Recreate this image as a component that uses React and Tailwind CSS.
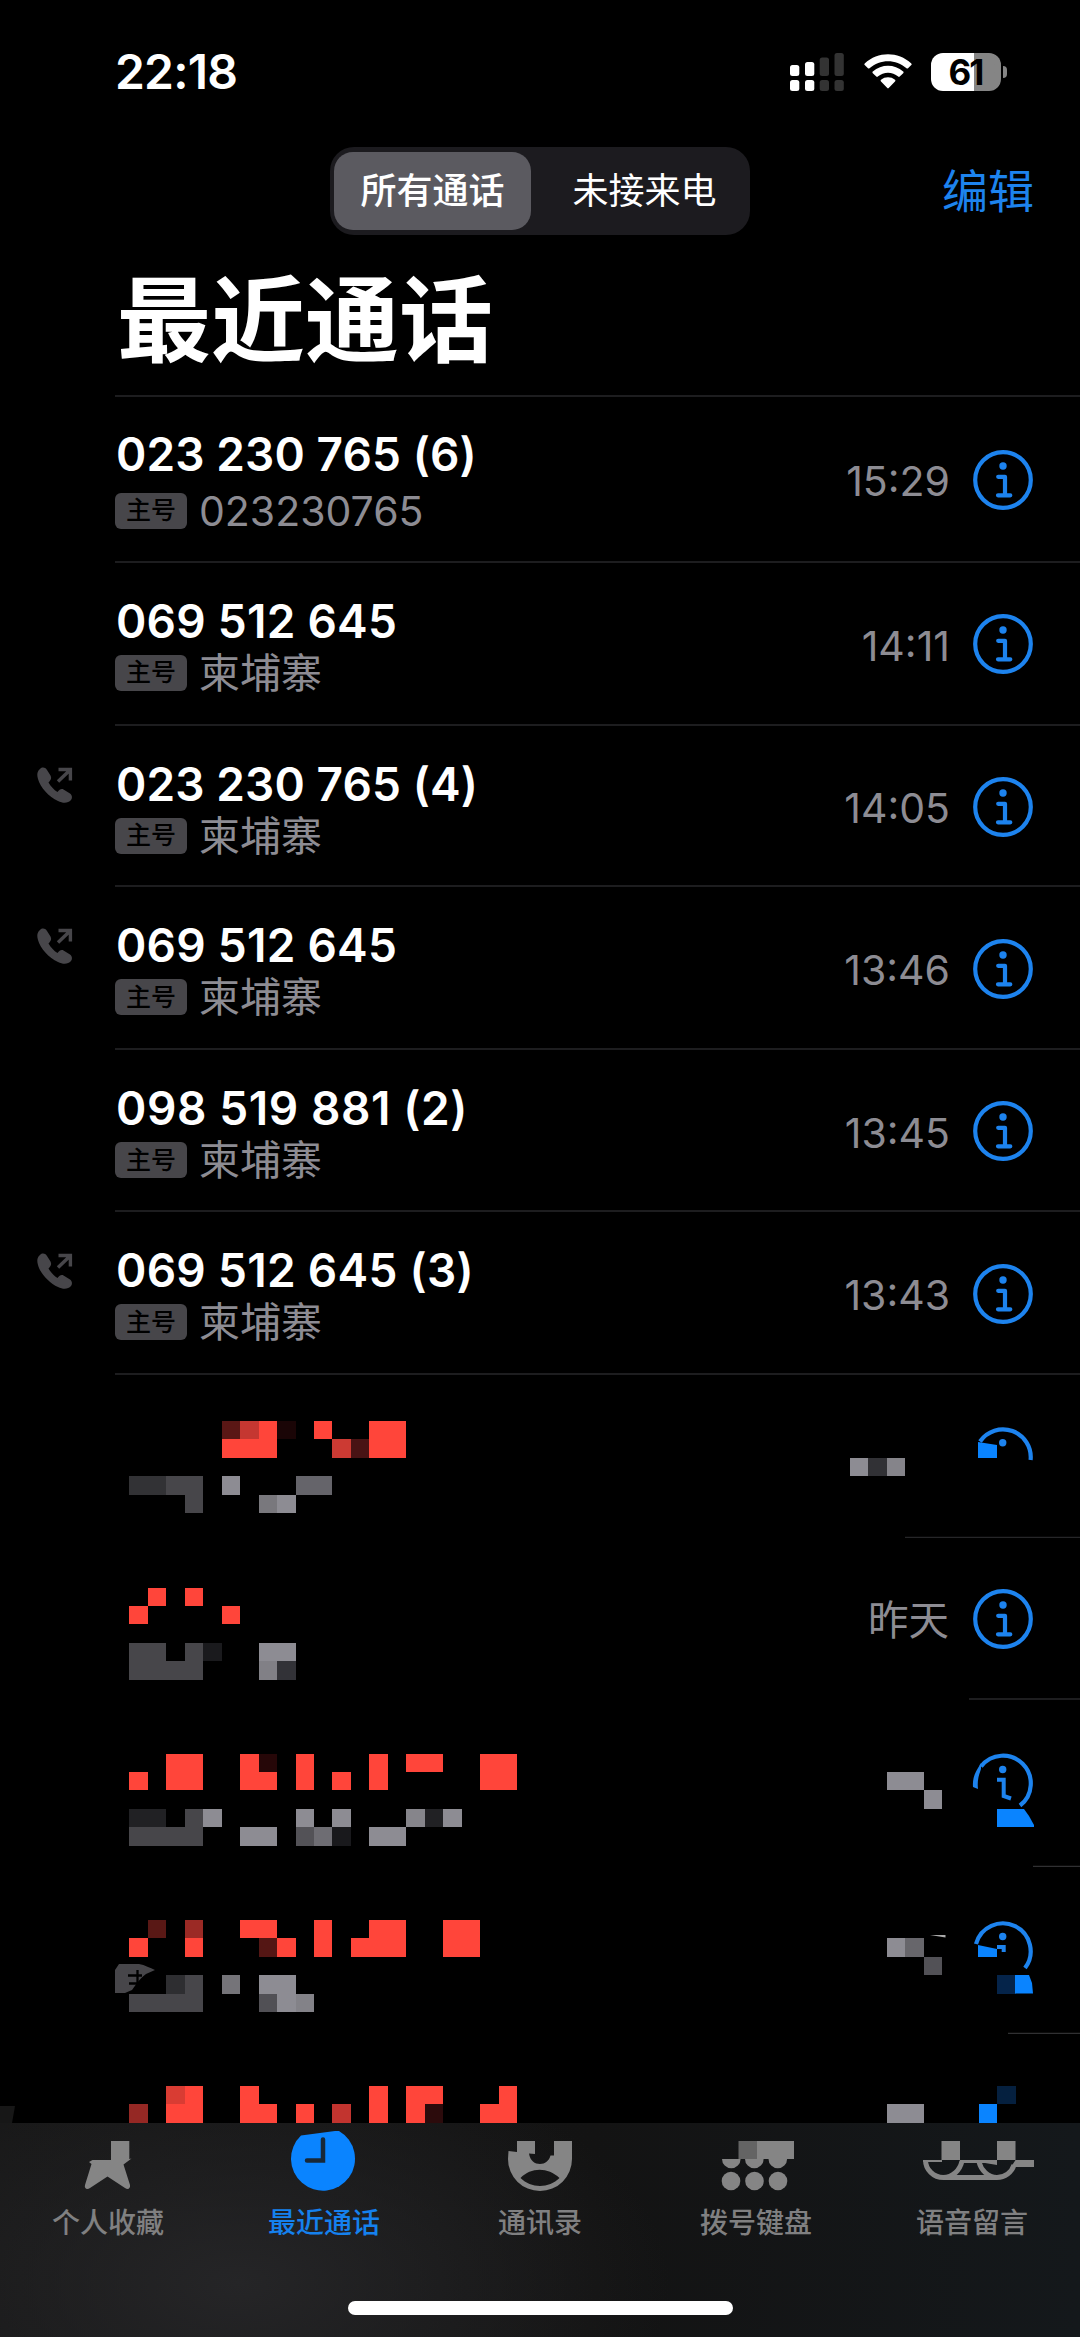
import React from 'react';

const CELL = 18.47;
const RED = '#ff453a';
const DIM = '#47464a';
const LIGHT = '#8d8c93';
const BLUE = '#0a84ff';

const CALLS = [
  { number: '023 230 765 (6)', place: '023230765', time: '15:29', height: 'h-[166px]', top: 'pt-[29px]', gap: 'mt-[11px]' },
  { number: '069 512 645', place: '柬埔寨', time: '14:11', height: 'h-[163px]', tracking: 'tracking-[0.25px]' },
  { number: '023 230 765 (4)', place: '柬埔寨', time: '14:05', height: 'h-[162px]', outgoing: true },
  { number: '069 512 645', place: '柬埔寨', time: '13:46', height: 'h-[163px]', outgoing: true, tracking: 'tracking-[0.25px]' },
  { number: '098 519 881 (2)', place: '柬埔寨', time: '13:45', height: 'h-[162px]', tracking: 'tracking-[0.6px]' },
  { number: '069 512 645 (3)', place: '柬埔寨', time: '13:43', height: 'h-[163px]', outgoing: true, tracking: 'tracking-[0.3px]' },
];

// [column, row, columns, rows, colour], in mosaic cells
const MOSAIC_A = [
  [12, 0, 3, 2, RED], [12, 0, 1, 1, '#5a1715'], [13, 0, 1, 1, '#c53731'], [15, 0, 1, 1, '#1a0506'],
  [17, 0, 1, 1, RED], [18, 1, 1, 1, '#cc3a33'], [19, 1, 1, 1, '#481314'], [20, 0, 2, 2, RED],
  [7, 3, 2, 1, '#323235'], [9, 3, 2, 1, DIM], [10, 4, 1, 1, DIM], [12, 3, 1, 1, LIGHT],
  [14, 4, 1, 1, '#79787d'], [15, 4, 1, 1, LIGHT], [16, 3, 2, 1, '#65646a'],
];
const MOSAIC_B = [
  [8, 0, 1, 1, RED], [10, 0, 1, 1, RED], [7, 1, 1, 1, RED], [12, 1, 1, 1, RED],
  [7, 3, 2, 1, DIM], [10, 3, 1, 1, DIM], [11, 3, 1, 1, '#1a1a1d'], [7, 4, 4, 1, DIM],
  [14, 3, 2, 1, LIGHT], [14, 4, 1, 1, '#818086'], [15, 4, 1, 1, '#323237'],
];
const MOSAIC_C = [
  [7, 1, 1, 1, RED], [9, 0, 2, 2, RED], [13, 0, 1, 2, RED], [14, 0, 1, 1, '#260708'], [14, 1, 1, 1, RED],
  [16, 0, 1, 2, RED], [18, 1, 1, 1, RED], [20, 0, 1, 2, RED], [22, 0, 2, 1, RED], [26, 0, 2, 2, RED],
  [7, 3, 2, 1, '#212124'], [10, 3, 1, 1, DIM], [11, 3, 1, 1, LIGHT], [7, 4, 4, 1, DIM],
  [13, 4, 2, 1, LIGHT], [16, 3, 1, 1, LIGHT], [18, 3, 1, 1, LIGHT], [16, 4, 1, 1, '#535257'],
  [17, 4, 1, 1, '#6e6d73'], [18, 4, 1, 1, '#19191c'], [20, 4, 2, 1, LIGHT],
  [22, 3, 1, 1, '#86858b'], [23, 3, 1, 1, '#212124'], [24, 3, 1, 1, LIGHT],
];
const MOSAIC_D = [
  [7, 1, 1, 1, RED], [8, 0, 1, 1, '#591815'], [10, 0, 1, 1, '#9b2a25'], [10, 1, 1, 1, RED],
  [13, 0, 2, 1, RED], [14, 1, 1, 1, '#541614'], [15, 1, 1, 1, RED], [17, 0, 1, 2, RED],
  [19, 1, 1, 1, RED], [20, 0, 2, 2, RED], [24, 0, 2, 2, RED],
  [9, 3, 1, 1, '#2e2e31'], [10, 3, 1, 1, DIM], [7, 4, 4, 1, DIM], [12, 3, 1, 1, '#757479'],
  [14, 3, 2, 1, LIGHT], [14, 4, 1, 1, '#515055'], [15, 4, 1, 1, LIGHT], [16, 4, 1, 1, '#838288'],
];
const MOSAIC_E = [
  [7, 1, 1, 1, '#952824'], [9, 0, 2, 2, RED], [9, 0, 1, 1, '#d93c33'], [13, 0, 1, 2, RED], [14, 1, 1, 1, RED],
  [16, 1, 1, 1, RED], [18, 1, 1, 1, '#c2342f'], [20, 0, 1, 2, RED], [22, 0, 2, 1, RED], [22, 1, 1, 1, RED],
  [23, 1, 1, 1, '#2c0b0c'], [27, 0, 1, 1, RED], [26, 1, 2, 1, RED],
];

function Cells({ cells, offset }) {
  return cells.map(([x, y, w, h, fill], i) => {
    const left = Math.round(x * CELL);
    const top = Math.round(offset + y * CELL);
    return (
      <rect
        key={i}
        x={left}
        y={top}
        width={Math.round((x + w) * CELL) - left}
        height={Math.round(offset + (y + h) * CELL) - top}
        fill={fill}
      />
    );
  });
}

function InfoIcon() {
  return (
    <svg width="60" height="60" viewBox="-30 -30 60 60" fill="none" stroke="#1d83ee" strokeWidth="4.2" className="shrink-0">
      <circle r="27.8" />
      <circle cy="-14" r="3.7" fill="#1d83ee" stroke="none" />
      <path d="M-4.8 -3.2H2V15.2M-5 15.3H7.3" strokeLinecap="round" strokeLinejoin="round" />
    </svg>
  );
}

function OutgoingIcon() {
  return (
    <svg width="36" height="37" viewBox="0 0 36 37" className="ml-[37px] mt-[41px]">
      <path
        fill={DIM}
        d="M3 2C5 0 8 0 10 3L13.5 8.5C14.800 11 14 13 11.500 15.500C13.500 19 17 23 20.500 25C22.500 22.200 24.500 21.500 26.500 22.500L33 26.500C35.300 28.200 35.500 31 34 33C31 36.500 26 36.500 21 34C12 30 3 20 1 12C-.5 7 .5 4 3 2Z"
      />
      <path fill="none" stroke={DIM} strokeWidth="3.4" d="M21 14.500 33 3M21.500 2.500H33.400V13.500" />
    </svg>
  );
}

function CallRow({ call }) {
  return (
    <div className={`flex ${call.height}`}>
      <div className="w-[115px] shrink-0">{call.outgoing && <OutgoingIcon />}</div>
      <div className="flex flex-1 border-b-2 border-[#1d1d1f] pr-[47px]">
        <div className={`flex-1 ${call.top || 'pt-[30px]'}`}>
          <p className={`pl-px text-[46px] leading-[56px] font-semibold text-white ${call.tracking || 'tracking-[0.1px]'}`}>{call.number}</p>
          <div className={`flex items-center ${call.gap || 'mt-[6px]'}`}>
            <span className="flex h-9 w-[72px] items-center justify-center rounded-md bg-[#47464a] text-[25px] leading-none font-medium text-black">
              主号
            </span>
            <span className="ml-[12px] text-[41px] leading-9 text-[#8d8c93]">{call.place}</span>
          </div>
        </div>
        <div className="flex items-center gap-[23px] pt-[2px]">
          <span className="pt-[4px] text-[41px] leading-none text-[#8d8c93]">{call.time}</span>
          <InfoIcon />
        </div>
      </div>
    </div>
  );
}

function HiddenRows() {
  return (
    <>
      <div className="flex h-[163px]">
        <svg width="820" height="163" viewBox="0 0 820 163"><Cells cells={MOSAIC_A} offset={46} /></svg>
        <svg width="260" height="163" viewBox="820 0 260 163">
          <Cells offset={46} cells={[[46, 2, 1, 1, LIGHT], [47, 2, 1, 1, '#313135'], [48, 2, 1, 1, '#85848a']]} />
          <path d="M980 66.500A27.800 27.800 0 0 1 1030.600 85" fill="none" stroke="#1d83ee" strokeWidth="4.200" />
          <path d="M978 67 997 70V83H978Z" fill={BLUE} />
          <circle cx="1002.700" cy="67.700" r="3.700" fill="#1d83ee" />
          <path d="M905 162.500H1080" stroke="#262628" strokeWidth="1.500" />
        </svg>
      </div>

      <div className="flex h-[162px]">
        <svg width="820" height="162" viewBox="0 0 820 162"><Cells cells={MOSAIC_B} offset={49.5} /></svg>
        <div className="flex flex-1 flex-col items-end">
          <div className="flex flex-1 items-center gap-6 pr-[47px] pt-[2px]">
            <span className="pt-[4px] text-[40.500px] leading-none text-[#8d8c93]">昨天</span>
            <InfoIcon />
          </div>
          <div className="h-0.5 w-[111px] bg-[#1d1d1f]" />
        </div>
      </div>

      <div className="flex h-[167px]">
        <svg width="820" height="167" viewBox="0 0 820 167"><Cells cells={MOSAIC_C} offset={53.5} /></svg>
        <svg width="260" height="167" viewBox="820 0 260 167">
          <Cells offset={53.5} cells={[[48, 1, 2, 1, LIGHT], [50, 2, 1, 1, LIGHT]]} />
          <g fill="none" stroke="#1d83ee" strokeWidth="4.200">
            <path d="M981 66.500A27.800 27.800 0 1 1 1020 105.500" />
            <path d="M997 79.700H1003.700V96L1011 98.500" strokeWidth="4" />
          </g>
          <path d="M981 63 978 68C973.500 75 972.500 81 973 87L978 89C977 80 979 75 981 69Z" fill="#1d83ee" />
          <circle cx="1002.700" cy="69.500" r="3.700" fill="#1d83ee" />
          <path d="M997 109H1024L1029 116 1034 125V127H997Z" fill={BLUE} />
          <path d="M1033 166.500H1080" stroke="#303032" strokeWidth="1.500" />
        </svg>
      </div>

      <div className="flex h-[167px]">
        <svg width="820" height="167" viewBox="0 0 820 167">
          <Cells cells={MOSAIC_D} offset={52.7} />
          <path d="M115 103 119 97H139C145 98 150 101 155 103L146 107C139 112 136 118 132 123L125 126H115Z" fill={DIM} />
          <path d="M128 108.500H142M137.500 103V116M129 116.500H140" fill="none" stroke="#000" strokeWidth="2.300" />
        </svg>
        <svg width="260" height="167" viewBox="820 0 260 167">
          <Cells
            offset={52.7}
            cells={[[48, 1, 1, 1, LIGHT], [49, 1, 1, 1, '#67666b'], [50, 2, 1, 1, '#525156'], [54, 3, 1, 1, '#05244a']]}
          />
          <path d="M930 68 945.500 68V70.500Z" fill="#aaa" />
          <g fill="none" stroke="#1d83ee" strokeWidth="4.200">
            <path d="M976 77A27.800 27.800 0 1 1 1025 101" />
            <path d="M997 80H1003.700V85" strokeWidth="4" />
          </g>
          <circle cx="1002.700" cy="69.500" r="3.700" fill="#1d83ee" />
          <path d="M978 78 997 82V90H978Z" fill={BLUE} />
          <path d="M1015 108H1029L1032 116 1033 126.500H1015Z" fill={BLUE} />
          <path d="M1008 166.500H1080" stroke="#303032" strokeWidth="1.500" />
        </svg>
      </div>

      <div className="flex h-[89px]">
        <svg width="820" height="89" viewBox="0 0 820 89">
          <Cells cells={MOSAIC_E} offset={52} />
          <path d="M0 72H15L12 89H0Z" fill="#171717" />
        </svg>
        <svg width="260" height="89" viewBox="820 0 260 89">
          <Cells offset={52} cells={[[48, 1, 2, 1, LIGHT], [53, 1, 1, 1, BLUE], [54, 0, 1, 1, '#05203f']]} />
        </svg>
      </div>
    </>
  );
}

function StatusBar() {
  return (
    <div className="flex h-[147px] items-start justify-between pl-[115px] pr-[73px] text-white">
      <span className="pt-[43px] text-[48px] leading-[58px] font-semibold tracking-[-0.8px]">22:18</span>
      <div className="flex items-start pt-[53px]">
        <svg width="54" height="38" viewBox="0 0 54 38" fill="#fff">
          <rect x="0" y="12" width="9.300" height="11" rx="2.500" />
          <rect x="15" y="9" width="9.300" height="14" rx="2.500" />
          <rect x="0" y="27" width="9.300" height="11" rx="2.500" />
          <rect x="15" y="27" width="9.300" height="11" rx="2.500" />
          <g fill="#333">
            <rect x="29.700" y="4.500" width="9.300" height="18.500" rx="2.500" />
            <rect x="44.500" y="0" width="9.300" height="23" rx="2.500" />
            <rect x="29.700" y="27" width="9.300" height="11" rx="2.500" />
            <rect x="44.500" y="27" width="9.300" height="11" rx="2.500" />
          </g>
        </svg>
        <svg width="48" height="36" viewBox="0 0 48 36" fill="#fff" className="ml-[20px] mt-px">
          <path d="M.7 9.500C14-2.800 34-2.800 47.300 9.500C47.800 10 47.800 10.500 47.300 11L44 14.200C43.500 14.700 43 14.700 42.500 14.200C32 4.800 16 4.800 5.500 14.200C5 14.700 4.500 14.700 4 14.200L.7 11C.2 10.500.2 10 .7 9.500Z" />
          <path d="M8.800 17.600C17.500 9.700 30.500 9.700 39.200 17.600C39.700 18 39.700 18.700 39.200 19.200L35.700 22.500C35.200 23 34.700 23 34.200 22.500C28.300 17.400 19.700 17.400 13.800 22.500C13.300 23 12.800 23 12.300 22.500L8.800 19.200C8.300 18.700 8.300 18 8.800 17.600Z" />
          <path d="M17 25.800C21 22.500 27 22.500 31 25.800C31.500 26.200 31.500 26.900 31 27.400L24.700 34C24.200 34.500 23.800 34.500 23.300 34L17 27.400C16.500 26.900 16.500 26.200 17 25.800Z" />
        </svg>
        <div className="ml-[19px] flex h-[38px] w-[70px] items-center justify-center rounded-[12px] bg-linear-to-r from-white from-61% to-[#858585] to-61%">
          <span className="pr-px text-[35px] leading-none font-bold tracking-[-2px] text-black">61</span>
        </div>
        <div className="ml-0.5 mt-[13px] h-3 w-1 rounded-r-full bg-[#858585]" />
      </div>
    </div>
  );
}

function NavBar() {
  return (
    <div className="grid h-[88px] grid-cols-[330px_420px_1fr] items-center">
      <div />
      <div className="flex h-[88px] rounded-[24px] bg-[#1c1b1f] px-1 py-[5px] text-[36px] leading-none font-medium text-white">
        <button type="button" className="w-[197px] rounded-[19px] bg-[#5b5a60]">所有通话</button>
        <button type="button" className="flex-1 pl-3 font-normal">未接来电</button>
      </div>
      <button type="button" className="pr-[46px] text-right text-[46px] leading-none text-[#1d83ee]">编辑</button>
    </div>
  );
}

const TABS = [
  {
    label: '个人收藏',
    view: '0 0 216 70',
    icon: (
      <path d="M111 14H129.300V32L131.500 31.500 123.500 37.500 130 58C130.500 61.500 128 63 125 61L107.500 49.500 90 61C87 63 84 61.500 85 58L91.500 37 89 35 92.500 33H111Z" fill="#858585" />
    ),
  },
  {
    label: '最近通话',
    active: true,
    view: '216 0 216 70',
    icon: (
      <>
        <path d="M301 8.500 335 4H339A32 32 0 1 1 301 8.500Z" fill={BLUE} />
        <path d="M323 12.500V33.500H307" fill="none" stroke="#182838" strokeWidth="4.500" strokeLinecap="round" />
      </>
    ),
  },
  {
    label: '通讯录',
    view: '432 0 216 70',
    icon: (
      <path
        fillRule="evenodd"
        fill="#858585"
        d="M508.500 24 517 25V14H535V27L529 26.500C530 34 535 37 540 37C545 37 549 34 550.500 28.500H554V14H572V32A32 32 0 0 1 508 32ZM520.500 51C531 40 548 40 559.500 51C549 61.500 531 61.500 520.500 51Z"
      />
    ),
  },
  {
    label: '拨号键盘',
    view: '648 0 216 70',
    icon: (
      <g fill="#858585">
        <path d="M722 32A9.300 9.300 0 0 0 740.600 32ZM745 32A9.300 9.300 0 0 0 763.600 32ZM768.500 32A9.300 9.300 0 0 0 787.100 32ZM757 14H794V32H757Z" />
        <path d="M738.500 14H757V32H738.500Z" fill="#646464" />
        <circle cx="731" cy="54" r="9.300" />
        <circle cx="754.500" cy="54" r="9.300" />
        <circle cx="778" cy="54" r="9.300" />
      </g>
    ),
  },
  {
    label: '语音留言',
    view: '864 0 216 70',
    icon: (
      <>
        <path d="M941.500 14H960V33H941.500ZM997 14H1015.500V33H997ZM1015.500 33H1034V40H1011ZM923 33H942V35H923ZM960 33H997V38L985 36H960Z" fill="#858585" />
        <path d="M925.500 33A18 17.500 0 0 0 943.500 50.500H997A18 17.500 0 0 0 1014 38M943 50.500C953 50.500 960 43 962 34M979 35C981 43 988 50.500 997 50.500" fill="none" stroke="#858585" strokeWidth="5" />
      </>
    ),
  },
];

function TabBar() {
  return (
    <div className="h-[214px] bg-linear-to-r from-[#171717] via-[#131313] via-55% to-[#14181b]">
      <div className="h-full bg-[radial-gradient(ellipse_40%_110%_at_22%_75%,#252527_0%,transparent_100%)]">
        <div className="grid h-[178px] grid-cols-5">
          {TABS.map((tab) => (
            <div key={tab.label} className="flex flex-col items-center pt-[4px]">
              <svg width="216" height="70" viewBox={tab.view}>{tab.icon}</svg>
              <span className={`mt-[12px] text-[28px] leading-7 font-medium ${tab.active ? 'text-[#1581ee]' : 'text-[#808081]'}`}>
                {tab.label}
              </span>
            </div>
          ))}
        </div>
        <div className="mx-auto h-[14px] w-[385px] rounded-full bg-white" />
      </div>
    </div>
  );
}

export default function App() {
  return (
    <div
      lang="zh-CN"
      className="flex h-[2337px] w-[1080px] flex-col overflow-hidden bg-black font-['Inter','Noto_Sans_CJK_SC',sans-serif]"
    >
      <StatusBar />
      <NavBar />
      <div className="flex h-[162px]">
        <div className="w-[115px]" />
        <h1 className="flex-1 border-b-2 border-[#1d1d1f] pl-[2px] pt-[39px] text-[94px] leading-[94px] font-bold text-white">最近通话</h1>
      </div>
      {CALLS.map((call, i) => (
        <CallRow key={i} call={call} />
      ))}
      <HiddenRows />
      <TabBar />
    </div>
  );
}
